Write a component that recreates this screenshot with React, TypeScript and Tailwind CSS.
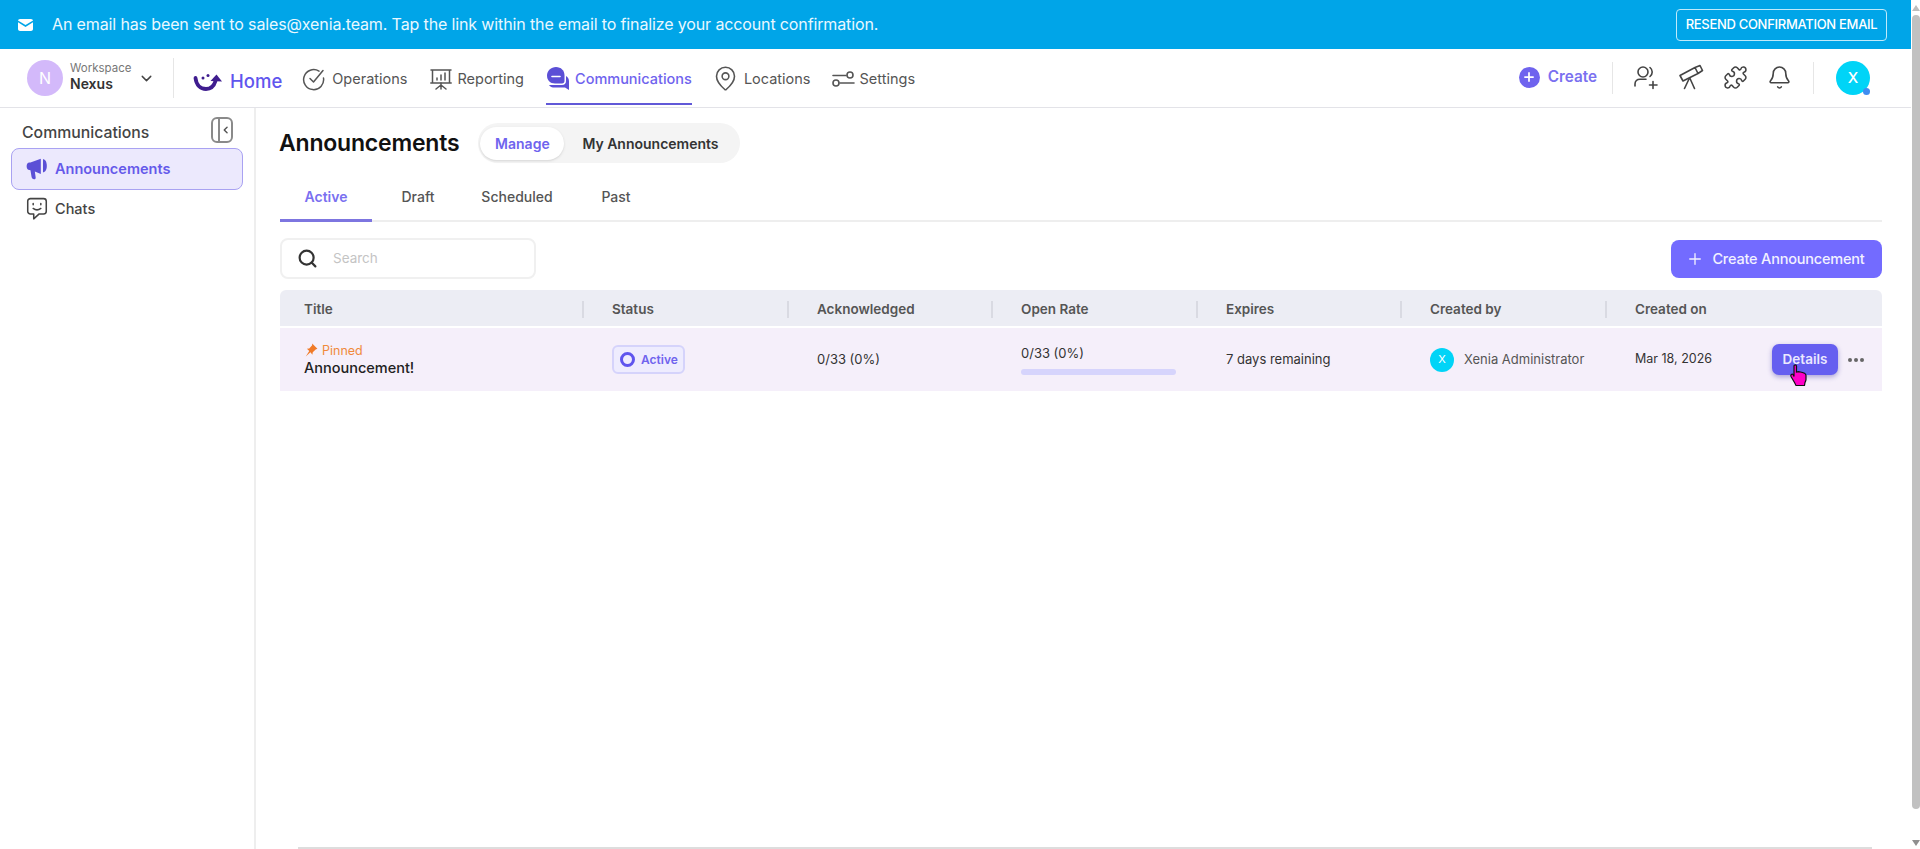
import { Bell, ChevronDown, ChevronLeft, MapPin, Plus, Puzzle, Search } from "lucide-react";

const font = "font-['Inter','Noto_Sans',sans-serif]";

const HomeLogo = () => (
    <svg width="30" height="20" viewBox="0 0 30 20" fill="none">
        <path d="M2.500 6c.8 7 5 11 10.500 11 4.500 0 8-3 9.500-8" stroke="#3f1d8f" strokeWidth="3.800" strokeLinecap="round" />
        <path d="M17.500 9l6-6.500 5.500 7z" fill="#3f1d8f" />
        <circle cx="10" cy="6" r="1.500" fill="#3f1d8f" />
        <circle cx="15" cy="3.500" r="1.500" fill="#3f1d8f" />
    </svg>
);

const OperationsIcon = () => (
    <svg width="24" height="24" viewBox="0 0 24 24" fill="none" stroke="#555" strokeWidth="1.500" strokeLinecap="round" strokeLinejoin="round">
        <path d="M17 4.200A10 10 0 1 0 21.500 11" />
        <path d="M8 11.500l3.500 3.500L21 3.500" />
    </svg>
);

const ReportingIcon = () => (
    <svg width="24" height="24" viewBox="0 0 24 24" fill="none" stroke="#555" strokeWidth="1.500" strokeLinecap="round" strokeLinejoin="round">
        <path d="M2 3h20M3.500 3v13h17V3M1.800 16h20.400" />
        <path d="M8 13v-2M12 13V8M16 13V6" />
        <path d="M12 16v6M12 18l-5 4M12 18l5 4" />
    </svg>
);

const CommsIcon = () => (
    <svg width="24" height="26" viewBox="0 0 24 26" fill="#5b4fd6">
        <path d="M10 1c5 0 8.500 3.500 8.500 8.500V15c0 1.500-1 2.500-2.500 2.500H9c-5 0-8-3.500-8-8S5 1 10 1z" />
        <path d="M20 10c2 1 3 3 3 5.500V24l-4-2.500H7c-1.500 0-3-1-4-2.500h13c2.500 0 4-1.500 4-4z" />
        <path d="M6 10.500h8" stroke="#fff" strokeWidth="1.600" strokeLinecap="round" />
    </svg>
);

const SettingsIcon = () => (
    <svg width="24" height="24" viewBox="0 0 24 24" fill="none" stroke="#555" strokeWidth="1.600" strokeLinecap="round">
        <path d="M2 8.500h13M9 16h14" />
        <circle cx="19" cy="8" r="3" />
        <circle cx="5" cy="16" r="3" />
    </svg>
);

const InviteIcon = () => (
    <svg width="26" height="26" viewBox="0 0 26 26" fill="none" stroke="#444" strokeWidth="1.600" strokeLinecap="round">
        <circle cx="10" cy="8" r="5" />
        <path d="M17 3.500c1.500 1.200 2.200 2.800 2.200 4.500s-.7 3.300-2.200 4.500" />
        <path d="M2 22v-2c0-3 2-4.800 5-4.800h6M20 17.500v7M16.500 21h7.500" />
    </svg>
);

const TelescopeIcon = () => (
    <svg width="26" height="26" viewBox="0 0 26 26" fill="none" stroke="#444" strokeWidth="1.600" strokeLinecap="round" strokeLinejoin="round">
        <path d="M2 11.500l15-8 3 6-15 7.500zM17 3.500l5-2 2.500 5-4.500 3" />
        <path d="M11 15l-4.500 9.500M12 14.500l4.500 10" />
    </svg>
);

const CollapseIcon = () => (
    <div className="flex h-[26px] w-[22px] items-center overflow-hidden rounded-[6px] border-2 border-[#8a8a8a]">
        <div className="h-full w-[7px] border-r-2 border-[#8a8a8a]" />
        <ChevronLeft size={12} strokeWidth={3} className="text-[#555]" />
    </div>
);

const Megaphone = () => (
    <svg width="22" height="24" viewBox="0 0 20 22" fill="#5b4fd6">
        <path d="M13.500 1.500 4 5H3C1.500 5 .5 6.300.5 8.500S1.500 12 3 12l1 .2 1 6c.2 1.500 1 2.300 2.300 2.300S9 19.300 8.700 18L8 13.300l5.500 2.200z" />
        <path d="M15.500 2c2 0 3.500 2.500 3.500 6s-1.500 6-3.500 6z" />
    </svg>
);

const ChatSmile = () => (
    <svg width="22" height="24" viewBox="0 0 20 22" fill="none" stroke="#444" strokeWidth="1.400" strokeLinecap="round" strokeLinejoin="round">
        <path d="M4 1.500h12c1.500 0 2.500 1 2.500 2.500v9c0 1.500-1 2.500-2.500 2.500h-4L7 20v-4.500H4c-1.500 0-2.500-1-2.500-2.500V4C1.500 2.500 2.500 1.500 4 1.500z" />
        <path d="M6.500 6v1M13.500 6v1M6.500 10.500c2 1.500 5 1.500 7 0" />
    </svg>
);

const Cursor = () => (
    <svg width="20" height="24" viewBox="0 0 20 24" className="absolute left-[17px] top-[20px]">
        <path
            d="M5 2c0-1.500 2.500-1.500 2.500 0v6l2-.3 2 .3 2 .5 2 .8c1 .5 1.500 1.200 1.500 2.200v4c0 1-.5 2-1 3l-.5 3H7l-1.500-3-3.500-6c-.8-1.500 1-3 2.200-1.800L5 12.500z"
            fill="#ff00c8"
            stroke="#111"
            strokeWidth="1.200"
        />
    </svg>
);

const columns = [
    { label: "Title", w: "w-[304px] pl-[24px]" },
    { label: "Status", w: "w-[205px] pl-[28px]" },
    { label: "Acknowledged", w: "w-[204px] pl-[28px]" },
    { label: "Open Rate", w: "w-[205px] pl-[28px]" },
    { label: "Expires", w: "w-[204px] pl-[28px]" },
    { label: "Created by", w: "w-[205px] pl-[28px]" },
    { label: "Created on", w: "flex-1 pl-[28px]" },
];

const App = () => {
    return (
        <div className={`${font} flex h-[849px] overflow-hidden bg-white`}>
            <div className="flex min-w-0 flex-1 flex-col">
                <div className="flex h-[49px] shrink-0 items-center justify-between bg-[#00a5e8] pl-[18px] pr-[24px]">
                    <div className="flex items-center gap-[19px] text-white">
                        <svg width="15" height="12" viewBox="0 0 15 12" fill="white">
                            <path d="M2 0h11c1 0 2 .8 2 1.500L7.500 6 0 1.500C0 .8 1 0 2 0z" />
                            <path d="M0 3.300 7.500 8 15 3.300V10c0 1-1 2-2 2H2c-1 0-2-1-2-2z" />
                        </svg>
                        <span className="pb-[2px] text-[16px] tracking-[-0.13px] text-[#e9f8ff]">
                            An email has been sent to sales@xenia.team. Tap the link within the email to finalize your account confirmation.
                        </span>
                    </div>
                    <button className="flex h-[32px] w-[211px] items-center justify-center rounded-[4px] border border-[#bfeafb] text-[13px] font-medium tracking-[-0.3px] text-white">
                        RESEND CONFIRMATION EMAIL
                    </button>
                </div>

                <div className="flex h-[59px] shrink-0 items-center justify-between border-b border-[#e3e3e8] pl-[27px] pr-[41px]">
                    <div className="flex h-full items-center">
                        <div className="flex w-[146px] items-center gap-[7px]">
                            <div className="flex h-9 w-9 items-center justify-center rounded-full bg-[#d3b9fa] text-[16px] text-white">
                                N
                            </div>
                            <div className="flex flex-col pb-[3px]">
                                <span className="text-[11.500px] leading-[14px] text-[#777]">Workspace</span>
                                <span className="text-[14px] font-semibold leading-[18px] text-[#333]">Nexus</span>
                            </div>
                            <ChevronDown size={17} className="text-[#444]" />
                        </div>
                        <div className="h-[40px] w-px bg-[#e6e6e6]" />
                        <div className="ml-[19px] mt-[7px] flex items-center gap-[7px]">
                            <HomeLogo />
                            <span className="text-[18.500px] font-medium text-[#5f55ee]">Home</span>
                        </div>
                        <div className="ml-[20px] mt-[1px] flex items-center gap-[6px]">
                            <OperationsIcon />
                            <span className="text-[14.500px] text-[#555]">Operations</span>
                        </div>
                        <div className="ml-[22px] mt-[1px] flex items-center gap-[4px]">
                            <ReportingIcon />
                            <span className="text-[14.500px] text-[#555]">Reporting</span>
                        </div>
                        <div className="ml-[22px] flex h-[56px] items-center gap-[5px] self-start border-b-2 border-[#6159d8] pt-[6px]">
                            <CommsIcon />
                            <span className="text-[14.500px] font-medium text-[#6f63ee]">Communications</span>
                        </div>
                        <div className="ml-[20px] mt-[1px] flex items-center gap-[5px]">
                            <MapPin size={27} strokeWidth={1.400} className="text-[#555]" />
                            <span className="text-[14.500px] text-[#555]">Locations</span>
                        </div>
                        <div className="ml-[20px] mt-[1px] flex items-center gap-[5px]">
                            <SettingsIcon />
                            <span className="text-[14.500px] text-[#555]">Settings</span>
                        </div>
                    </div>
                    <div className="flex h-full items-center">
                        <div className="flex items-center gap-[8px] pb-[2px]">
                            <div className="flex h-[21px] w-[21px] items-center justify-center rounded-full bg-[#6f63ee]">
                                <Plus size={14} strokeWidth={3} className="text-white" />
                            </div>
                            <span className="text-[15.300px] font-semibold text-[#7a70f0]">Create</span>
                        </div>
                        <div className="ml-[15px] h-[32px] w-px bg-[#e6e6e6]" />
                        <div className="ml-[20px] flex items-center gap-[19px] pb-[2px]">
                            <InviteIcon />
                            <TelescopeIcon />
                            <Puzzle size={25} strokeWidth={1.500} className="text-[#444]" />
                            <Bell size={25} strokeWidth={1.500} className="text-[#444]" />
                        </div>
                        <div className="ml-[21px] h-[32px] w-px bg-[#e6e6e6]" />
                        <div className="relative ml-[22px] flex h-[34px] w-[34px] items-center justify-center rounded-full bg-[#00d4f7] text-[15px] font-medium text-white">
                            X
                            <div className="absolute bottom-0 right-0 h-[7px] w-[7px] rounded-full bg-[#3f8cf0]" />
                        </div>
                    </div>
                </div>

                <div className="flex min-h-0 flex-1">
                    <aside className="w-[256px] shrink-0 border-r-2 border-[#eeeeee] pl-[11px] pr-[11px]">
                        <div className="flex h-[40px] items-center justify-between pl-[11px] pr-[10px] pt-[4px]">
                            <span className="pt-[5px] text-[15.800px] font-medium text-[#444]">Communications</span>
                            <CollapseIcon />
                        </div>
                        <div className="flex h-[42px] items-center gap-[7px] rounded-[8px] border border-[#a9a2f2] bg-[#ece9fd] pl-[14px]">
                            <Megaphone />
                            <span className="text-[14.500px] font-semibold text-[#6559ea]">Announcements</span>
                        </div>
                        <div className="mt-[1px] flex h-[36px] items-center gap-[7px] pl-[15px]">
                            <ChatSmile />
                            <span className="text-[14.500px] font-medium text-[#444]">Chats</span>
                        </div>
                    </aside>

                    <main className="flex min-w-0 flex-1 flex-col pl-[24px] pr-[29px]">
                        <div className="flex h-[72px] shrink-0 items-center gap-[19px] pb-[2px]">
                            <h1 className="-ml-px text-[23px] font-semibold leading-none tracking-[-0.2px] text-[#111]">Announcements</h1>
                            <div className="flex h-[40px] items-center rounded-full bg-[#f4f4f4] px-[2px]">
                                <span className="flex h-[33px] w-[84px] items-center justify-center rounded-full bg-white text-[14px] font-semibold text-[#6f63ee] shadow-sm">
                                    Manage
                                </span>
                                <span className="pl-[18px] pr-[19px] text-[14px] font-semibold text-[#333]">My Announcements</span>
                            </div>
                        </div>

                        <div className="flex h-[42px] shrink-0 items-stretch border-b-2 border-[#eeeeee] text-[14px] font-medium text-[#555]">
                            <div className="-mb-[2px] flex w-[92px] items-center justify-center border-b-[3px] border-[#7d75e0] pb-[7px] font-semibold text-[#7a70f0]">
                                Active
                            </div>
                            <div className="flex w-[92px] items-center justify-center pb-[8px]">Draft</div>
                            <div className="flex w-[106px] items-center justify-center pb-[8px]">Scheduled</div>
                            <div className="flex w-[92px] items-center justify-center pb-[8px]">Past</div>
                        </div>

                        <div className="mt-[16px] flex shrink-0 items-center justify-between">
                            <div className="flex h-[41px] w-[256px] items-center gap-[15px] rounded-[8px] border-2 border-[#f0f0f0] pl-[15px]">
                                <Search size={21} strokeWidth={2.500} className="text-[#333]" />
                                <span className="text-[13.500px] text-[#c4c4c4]">Search</span>
                            </div>
                            <button className="flex h-[38px] w-[211px] items-center justify-center gap-[8px] rounded-[8px] bg-[#736bff] pr-[2px] text-[14.500px] font-medium tracking-[-0.2px] text-[#f2f1ff]">
                                <Plus size={18} strokeWidth={1.800} />
                                Create Announcement
                            </button>
                        </div>

                        <div className="mt-[11px] flex h-[36px] shrink-0 items-center rounded-t-[6px] bg-[#ecedf4] pt-[2px] text-[13.500px] font-semibold text-[#555]">
                            {columns.map((col, i) => (
                                <div key={col.label} className={`flex h-[17px] ${col.w} items-center ${i < 6 ? "border-r-2 border-[#d9dae2]" : ""}`}>
                                    {col.label}
                                </div>
                            ))}
                        </div>

                        <div className="mt-[2px] flex h-[63px] shrink-0 items-center bg-[#f5effa] text-[13px] text-[#333]">
                            <div className="flex w-[304px] flex-col pb-[2px] pl-[24px]">
                                <span className="flex items-center gap-[4px] text-[12.500px] leading-[17px] text-[#f08a3c]">
                                    <svg width="14" height="14" viewBox="0 0 12 12" fill="#f07a28">
                                        <path d="M7 .5l4.500 4.500-1.500.5-2.500 2.500-.3 2L5.500 8 1.500 11.500 4.500 6.800 2.500 5l2-.3L7 2z" />
                                    </svg>
                                    Pinned
                                </span>
                                <span className="text-[14.500px] font-medium leading-[17px] text-[#222]">Announcement!</span>
                            </div>
                            <div className="w-[205px] pl-[28px]">
                                <div className="flex h-[29px] w-[73px] items-center gap-[6px] rounded-[6px] border-2 border-[#d5d3fb] bg-[#eeecfe] pl-[6px]">
                                    <div className="h-[15px] w-[15px] rounded-full border-[3px] border-[#5f55ee]" />
                                    <span className="text-[12px] font-semibold text-[#6f63ee]">Active</span>
                                </div>
                            </div>
                            <div className="w-[204px] pl-[28px]">0/33 (0%)</div>
                            <div className="w-[205px] pl-[28px]">
                                <div className="pb-[6px]">0/33 (0%)</div>
                                <div className="h-[6px] w-[155px] rounded-full bg-[#d6d4fc]" />
                            </div>
                            <div className="w-[204px] pl-[28px]">7 days remaining</div>
                            <div className="flex w-[205px] items-center gap-[10px] pl-[28px]">
                                <div className="flex h-[24px] w-[24px] items-center justify-center rounded-full bg-[#00d4f7] text-[11px] text-white">
                                    X
                                </div>
                                <span className="whitespace-nowrap text-[#555]">Xenia Administrator</span>
                            </div>
                            <div className="flex flex-1 items-center pl-[28px]">
                                <span className="w-[76px] whitespace-nowrap text-[12.500px]">Mar 18, 2026</span>
                                <div className="relative ml-[61px] flex h-[31px] w-[66px] shrink-0 items-center justify-center rounded-[7px] bg-[#665ff0] text-[13.500px] font-semibold text-[#ece9ff] shadow-[0_2px_5px_rgba(60,50,160,0.4)]">
                                    Details
                                    <Cursor />
                                </div>
                                <div className="ml-[10px] flex shrink-0 gap-[2px]">
                                    <div className="h-[4px] w-[4px] rounded-full bg-[#666]" />
                                    <div className="h-[4px] w-[4px] rounded-full bg-[#666]" />
                                    <div className="h-[4px] w-[4px] rounded-full bg-[#666]" />
                                </div>
                            </div>
                        </div>

                        <div className="ml-[18px] mr-[10px] mt-auto h-[2px] shrink-0 bg-[#dddddd]" />
                    </main>
                </div>
            </div>

            <div className="flex w-[9px] shrink-0 flex-col items-center bg-white pt-[5px]">
                <div className="h-0 w-0 border-x-[4px] border-b-[6px] border-x-transparent border-b-[#bdbdbd]" />
                <div className="mt-[4px] h-[794px] w-[8px] rounded-full bg-[#c1c1c1]" />
                <div className="mt-[31px] h-0 w-0 border-x-[4px] border-t-[6px] border-x-transparent border-t-[#8f8f8f]" />
            </div>
        </div>
    );
};

export default App;
